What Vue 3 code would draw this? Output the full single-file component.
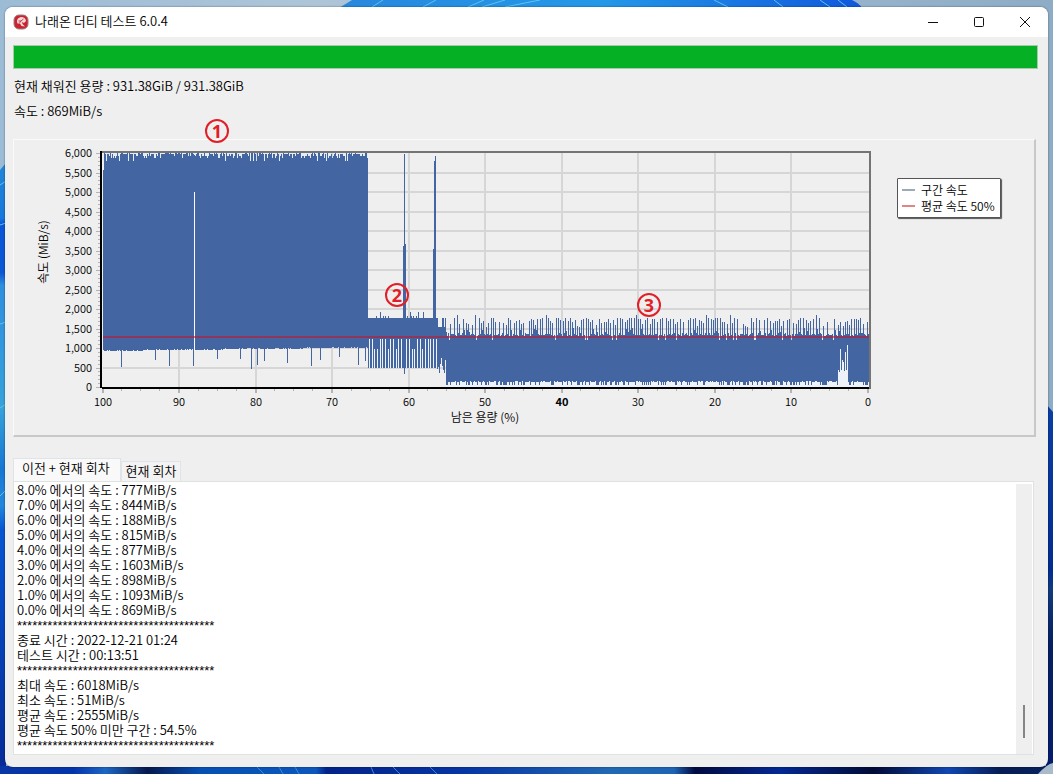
<script setup>
import { ref } from 'vue'

const activeTab = ref(0)
const tabs = ['이전 + 현재 회차', '현재 회차']

const stars = '*'.repeat(39)
const log = [
  '8.0% 에서의 속도 : 777MiB/s',
  '7.0% 에서의 속도 : 844MiB/s',
  '6.0% 에서의 속도 : 188MiB/s',
  '5.0% 에서의 속도 : 815MiB/s',
  '4.0% 에서의 속도 : 877MiB/s',
  '3.0% 에서의 속도 : 1603MiB/s',
  '2.0% 에서의 속도 : 898MiB/s',
  '1.0% 에서의 속도 : 1093MiB/s',
  '0.0% 에서의 속도 : 869MiB/s',
  stars,
  '종료 시간 : 2022-12-21 01:24',
  '테스트 시간 : 00:13:51',
  stars,
  '최대 속도 : 6018MiB/s',
  '최소 속도 : 51MiB/s',
  '평균 속도 : 2555MiB/s',
  '평균 속도 50% 미만 구간 : 54.5%',
  stars,
]

// Chart scales: 6000 MiB/s at y=153, 0 at y=387; 100 % at x=103, 0 % at x=868.
const yOf = (v) => Math.round(387 - v * 0.039)
const xOf = (p) => Math.floor(103 + (100 - p) * 7.65)
const speeds = Array.from({ length: 13 }, (_, i) => i * 500)
const percents = Array.from({ length: 11 }, (_, i) => i * 10)
const minorY = Array.from({ length: 61 }, (_, i) => Math.round(387 - i * 3.9))
const minorX = Array.from({ length: 41 }, (_, i) => Math.round(103 + i * 19.125))

let seed = 20221
const rnd = () => {
  seed = (seed + 0x6d2b79f5) | 0
  let t = Math.imul(seed ^ (seed >>> 15), 1 | seed)
  t = (t + Math.imul(t ^ (t >>> 7), 61 | t)) ^ t
  return ((t ^ (t >>> 14)) >>> 0) / 4294967296
}
const dips = { 121: 367, 155: 360, 169: 366, 193: 366, 217: 359, 240: 359, 251: 369, 257: 365, 264: 361, 287: 363, 311: 366, 320: 360, 339: 357, 358: 365, 365: 361 }
const peaks = { 403: 246, 404: 154, 405: 244, 433: 249, 434: 161, 435: 156 }
const comb = [1, 0, 1, 1, 0, 1, 0, 1]
const notch = { 838: 370, 839: 372, 840: 349, 841: 370, 842: 360, 843: 362, 844: 371, 845: 352, 846: 370, 847: 345 }

let sinceSpike = 0
function column(x) {
  const r = rnd()
  const s = rnd()
  if (x === 103) return [170, 350]
  if (x === 194) return [155, 192]
  if (x < 368) {
    const base = 351 - Math.round((x - 103) / 80)
    return [r < 0.3 ? 153 : r < 0.65 ? 154 : r < 0.85 ? 156 : r < 0.96 ? 158 : 161, dips[x] ?? base + (s < 0.25 ? -1 : 0)]
  }
  if (x < 437) {
    const top = peaks[x] ?? (r < 0.82 ? 318 : r < 0.93 ? 316 : 312)
    return [top, x === 404 ? 374 : comb[x % 8] ? 368 : s < 0.2 ? 349 : 339]
  }
  if (x < 446) return [r < 0.5 ? 318 : 327, 352 + Math.round(s * 22)]
  // Past 55 % the speed spikes every two to four samples.
  sinceSpike += 1
  let top = r < 0.2 ? 328 + Math.round(s * 5) : r < 0.93 ? 333 + Math.round(s * 3) : 340
  if (sinceSpike > 1 && r < 0.58) {
    sinceSpike = 0
    top = r < 0.03 ? 315 : 318 + Math.round(s * s * 9)
  }
  return [top, notch[x] ?? (s < 0.5 ? 382 : s < 0.7 ? 381 : 385)]
}
let speedPath = ''
for (let x = 103; x < 869; x++) {
  const [t, b] = column(x)
  speedPath += `M${x} ${t}h1V${b}h-1z`
}
const marks = [
  { n: 1, x: 217, y: 131 },
  { n: 2, x: 397, y: 295 },
  { n: 3, x: 649, y: 305 },
]
</script>

<template>
  <div class="desktop">
    <svg class="wallpaper" viewBox="0 0 1053 774" preserveAspectRatio="none" aria-hidden="true">
      <defs>
        <linearGradient id="sky" x1="0" x2="1"><stop offset="0" stop-color="#9cbcd6" /><stop offset=".3" stop-color="#aec5d8" /><stop offset="1" stop-color="#8eacc6" /></linearGradient>
        <linearGradient id="leftBloom" x1="0" y1="0" x2="0" y2="1">
          <stop offset="0" stop-color="#2186d8" /><stop offset=".09" stop-color="#1679dc" /><stop offset=".1" stop-color="#0a55d8" /><stop offset=".18" stop-color="#0a58d4" /><stop offset=".2" stop-color="#2f8fe0" /><stop offset=".4" stop-color="#36a2da" /><stop offset=".5" stop-color="#1677d4" /><stop offset=".56" stop-color="#2288dd" /><stop offset=".6" stop-color="#0656d2" /><stop offset="1" stop-color="#062a96" />
        </linearGradient>
        <linearGradient id="topBloom" x1="0" x2="1"><stop offset="0" stop-color="#2888de" /><stop offset=".5" stop-color="#2398e8" /><stop offset="1" stop-color="#1158dc" /></linearGradient>
        <linearGradient id="rightBloom" x1="0" y1="0" x2="0" y2="1"><stop offset="0" stop-color="#0a3fa4" /><stop offset=".45" stop-color="#022c92" /><stop offset=".5" stop-color="#123a80" /><stop offset=".65" stop-color="#061f62" /><stop offset="1" stop-color="#041c70" /></linearGradient>
        <linearGradient id="bottomBloom" x1="0" x2="1">
          <stop offset="0" stop-color="#0836a4" /><stop offset=".07" stop-color="#0434ac" /><stop offset=".1" stop-color="#1b67c4" /><stop offset=".14" stop-color="#06184e" /><stop offset=".19" stop-color="#0650b4" /><stop offset=".3" stop-color="#0d57bc" /><stop offset=".31" stop-color="#03228a" /><stop offset=".44" stop-color="#0635a4" /><stop offset=".58" stop-color="#2169b4" /><stop offset=".64" stop-color="#1e64b4" /><stop offset=".66" stop-color="#020a40" /><stop offset=".74" stop-color="#032894" /><stop offset=".83" stop-color="#020b36" /><stop offset=".9" stop-color="#1047b2" /><stop offset=".95" stop-color="#061c54" /><stop offset="1" stop-color="#092460" />
        </linearGradient>
      </defs>
      <rect width="1053" height="774" fill="url(#sky)" />
      <path d="M339 8 352 0H852Q859 3 862 8z" fill="url(#topBloom)" />
      <path d="M372 7 383 0M423 7 436 0M468 7 484 0M482 7 505 0M505 7 540 0M714 0 728 7M774 0 783 7M820 0 830 7M838 0 847 7" stroke="#5fc2ee" fill="none" />
      <path d="M0 170 6 163V774H0z" fill="url(#leftBloom)" />
      <path d="M0 185 6 181M0 225 6 223M0 324 6 322M0 408 6 404M0 496 6 490" stroke="#62bfe8" fill="none" />
      <path d="M1046 404 1053 412V774H1046z" fill="url(#rightBloom)" />
      <path d="M0 766H1053V774H0z" fill="url(#bottomBloom)" />
      <path d="M257 767 264 774M279 767 283 774M295 767 299 774M371 767 374 774M393 767 400 774M430 767 437 774" stroke="#3e88d8" fill="none" />
      <path d="M1038 774Q1047 764 1053 763V774z" fill="#a9bbca" />
    </svg>

    <main class="window">
      <header class="titlebar">
        <svg class="app-icon" viewBox="0 0 16 16" aria-hidden="true">
          <rect x="1" y="1" width="14" height="14" rx="5" fill="#cb2230" stroke="#9a8080" />
          <path d="M4 8Q3.500 4 8 3Q12.500 3 13 7L11 9 9 8 9.500 10 12 12.500 8.500 12 7 9.500 4.500 9.500z" fill="#f4d8d8" />
          <path d="M5.500 7 8 7 10.500 5M8 7 6.500 9" fill="none" stroke="#cb3b45" />
        </svg>
        <h1>나래온 더티 테스트 6.0.4</h1>
        <div class="controls">
          <button type="button" aria-label="최소화"><svg viewBox="0 0 12 12"><path d="M1 6.500H11" /></svg></button>
          <button type="button" aria-label="최대화"><svg viewBox="0 0 12 12"><rect x="1.500" y="1.500" width="9" height="9" rx="1" /></svg></button>
          <button type="button" aria-label="닫기"><svg viewBox="0 0 12 12"><path d="M1 1 11 11M11 1 1 11" /></svg></button>
        </div>
      </header>

      <div class="client">
        <div class="progress" role="progressbar" aria-valuenow="100" aria-label="진행률"></div>
        <div class="infos">
          <p>현재 채워진 용량 : 931.38GiB / 931.38GiB</p>
          <p>속도 : 869MiB/s</p>
        </div>

        <section class="panel">
          <svg class="chart" viewBox="14 140 876 295" role="img" aria-label="속도 그래프">
            <g shape-rendering="crispEdges">
              <rect x="103" y="152" width="265" height="9" fill="#e6edf2" />
              <g fill="#d6d6d6">
                <rect v-for="v in speeds.slice(1, 12)" :key="v" x="103" :y="yOf(v) - 1" width="766" height="2" />
                <rect v-for="p in percents.slice(1, 10)" :key="p" :x="xOf(p) - 1" y="152" width="2" height="235" />
              </g>
              <path d="M368 339H437V368H368zM446 380H869V387H446zM838 344H848V387H838z" fill="#ecf2f8" />
              <rect x="194" y="192" width="1" height="159" fill="#f7faff" />
              <path :d="speedPath" fill="#4365a2" />
              <rect x="103" y="336" width="766" height="2" fill="#c4162c" fill-opacity=".6" />
              <rect x="102" y="151" width="768" height="2" fill="#747474" />
              <rect x="869" y="151" width="2" height="238" fill="#747474" />
              <g fill="#b4b4b4">
                <rect v-for="y in minorY" :key="y" x="98" :y="y" width="2" height="1" />
                <rect v-for="v in speeds" :key="v" x="96" :y="yOf(v)" width="4" height="1" />
                <rect v-for="x in minorX" :key="x" :x="x - 1" y="389" width="1" height="2" />
                <rect v-for="p in percents" :key="p" :x="xOf(p) - 1" y="389" width="2" height="4" />
              </g>
              <rect x="100" y="151" width="2" height="237" fill="#000" />
              <rect x="102" y="387" width="767" height="2" fill="#000" />
            </g>
            <g class="axis">
              <text v-for="v in speeds" :key="v" x="92" :y="yOf(v) + 4" text-anchor="end">{{ v.toLocaleString('en-US') }}</text>
              <text v-for="p in percents" :key="p" :x="xOf(p)" y="406" text-anchor="middle" :class="{ strong: p === 40 }">{{ p }}</text>
              <text class="title" x="485" y="422" text-anchor="middle">남은 용량 (%)</text>
              <text class="title" transform="translate(48 252) rotate(-90)" text-anchor="middle">속도 (MiB/s)</text>
            </g>
            <g v-for="m in marks" :key="m.n" class="mark">
              <circle :cx="m.x" :cy="m.y" r="11" />
              <text :x="m.x" :y="m.y + 7" text-anchor="middle">{{ m.n }}</text>
            </g>
          </svg>
          <ul class="legend">
            <li><i class="key speed"></i>구간 속도</li>
            <li><i class="key average"></i>평균 속도 50%</li>
          </ul>
        </section>

        <div class="tabs" role="tablist">
          <button v-for="(t, i) in tabs" :key="t" type="button" role="tab" :aria-selected="activeTab === i" :class="{ active: activeTab === i }" @click="activeTab = i">{{ t }}</button>
        </div>
        <section class="page" role="tabpanel">
          <div class="log" role="log" aria-label="테스트 기록">
            <p v-for="(line, i) in log" :key="i" :class="{ stars: line === stars }">{{ line }}</p>
          </div>
          <div class="scrollbar"><div class="thumb"></div></div>
        </section>
      </div>
    </main>
  </div>
</template>

<style>
body { margin: 0; }
</style>

<style scoped>
.desktop {
  position: relative;
  box-sizing: border-box;
  min-height: 100vh;
  padding: 7px 5px;
  display: flex;
  font: 350 13px/15px "Noto Sans CJK KR", sans-serif;
  color: #000;
}
.wallpaper { position: absolute; inset: 0; width: 100%; height: 100%; }
.window {
  position: relative;
  flex: 1;
  display: flex;
  flex-direction: column;
  min-width: 0;
  border-radius: 8px;
  overflow: hidden;
  background: #efefef;
  box-shadow: 0 0 2px rgba(0, 0, 0, 0.5);
}
.titlebar { display: flex; align-items: center; height: 30px; padding-left: 8px; background: #fff; }
.app-icon { width: 16px; height: 16px; margin-right: 6px; }
h1 { flex: 1; margin: 0; padding-bottom: 3px; font: inherit; }
.controls { display: flex; height: 100%; }
.controls button { display: grid; place-items: center; width: 46px; padding: 0; border: 0; background: none; }
.controls svg { width: 12px; height: 12px; fill: none; stroke: #111; stroke-width: 1; }
.client { flex: 1; display: flex; flex-direction: column; padding: 8px 10px 12px 8px; }
.progress { box-sizing: border-box; height: 24px; margin-bottom: 4px; border: 1px solid #a9c9ad; background: #06b025; }
.infos { padding: 0 0 16px 1px; line-height: 25px; }
.infos p { margin: 0; }
.panel {
  display: flex;
  align-items: flex-start;
  margin: 0 2px 21px 0;
  border: solid;
  border-width: 1px 2px 2px 1px;
  border-color: #fafafa #c8c8c8 #c8c8c8 #fafafa;
}
.chart { display: block; flex: 1; min-width: 0; overflow: visible; }
.axis { font-size: 11px; fill: #000; }
.title { font-size: 12px; }
.strong { font-weight: 700; }
.mark circle { fill: none; stroke: #e01f28; stroke-width: 2; }
.mark text { font: 700 18px "Open Sans", sans-serif; fill: #e01f28; }
.legend {
  box-sizing: border-box;
  width: 104px;
  margin: 38px 33px 0 7px;
  padding: 3px 4px;
  list-style: none;
  border: 1px solid #555;
  border-radius: 1px;
  background: #fff;
  box-shadow: 1px 1px 1px #555;
  font-size: 12px;
  line-height: 16px;
  white-space: nowrap;
}
.legend li { display: flex; align-items: center; }
.key { width: 13px; height: 2px; margin-right: 6px; }
.speed { background: #9aabb8; }
.average { background: #e08488; }
.tabs { display: flex; align-items: flex-end; }
.tabs button { height: 20px; padding: 0 4px 3px; border: 1px solid #e0e4e8; border-bottom: 0; background: #f3f3f3; font: inherit; color: inherit; }
.tabs .active { height: 23px; padding: 0 10px 5px 8px; background: #f9f9f9; }
.page { flex: 1; display: flex; margin-right: 4px; border: 1px solid #dfe3e0; background: #fff; }
.log { flex: 1; padding: 0 3px; }
.log p { margin: 0; height: 15px; white-space: pre; }
.log .stars { font: 13px/17px "Liberation Sans", sans-serif; }
.scrollbar { display: flex; flex-direction: column; justify-content: flex-end; align-items: center; width: 16px; margin: 2px 1px 0 0; padding-bottom: 16px; box-sizing: border-box; background: #efefef; }
.thumb { width: 2px; height: 33px; background: #858585; }
</style>
